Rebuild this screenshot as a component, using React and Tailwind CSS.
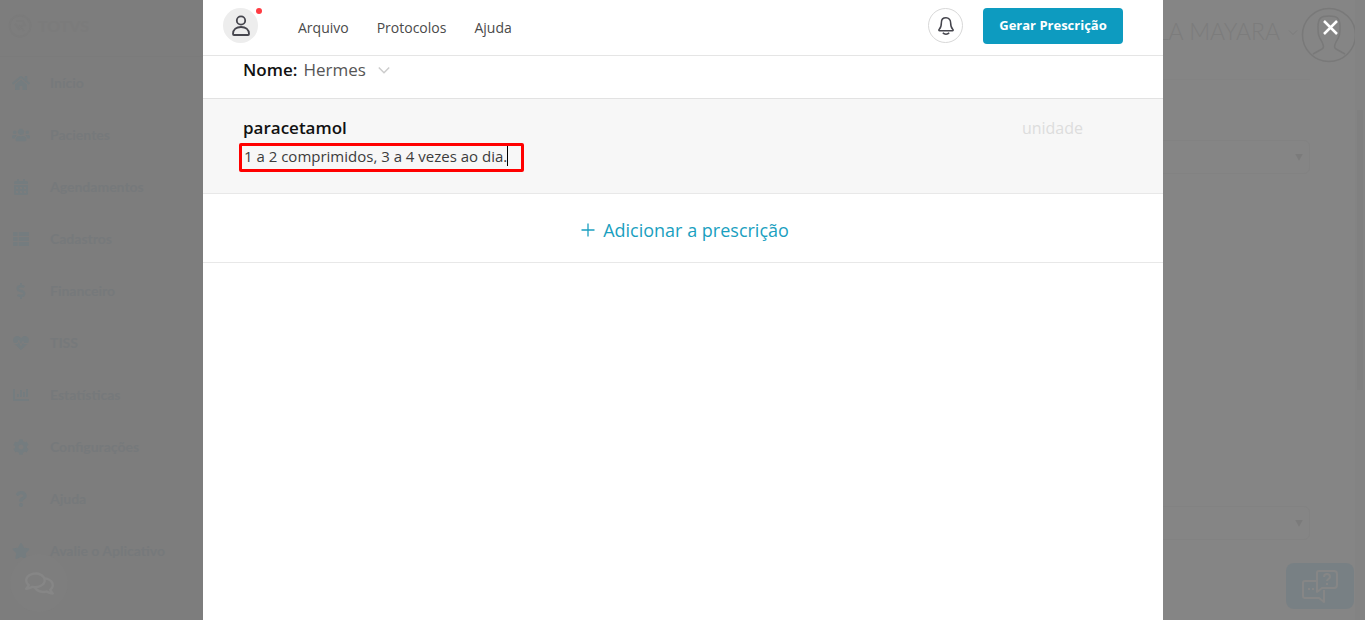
import React, { useState } from 'react';
import {
  FaHome,
  FaUsers,
  FaCalendarAlt,
  FaThList,
  FaDollarSign,
  FaHeartbeat,
  FaChartBar,
  FaCog,
  FaQuestion,
  FaStar,
  FaRegComments,
} from 'react-icons/fa';

const menuItems = [
  { label: 'Início', icon: FaHome },
  { label: 'Pacientes', icon: FaUsers },
  { label: 'Agendamentos', icon: FaCalendarAlt },
  { label: 'Cadastros', icon: FaThList },
  { label: 'Financeiro', icon: FaDollarSign },
  { label: 'TISS', icon: FaHeartbeat },
  { label: 'Estatísticas', icon: FaChartBar },
  { label: 'Configurações', icon: FaCog },
  { label: 'Ajuda', icon: FaQuestion },
  { label: 'Avalie o Aplicativo', icon: FaStar },
];

const Sidebar = () => (
  <aside className="relative w-[203px] shrink-0 bg-[#7d7d7d] font-['Lato',sans-serif]">
    <div className="flex h-[57px] items-center gap-[6px] border-b border-[#7b7b7b] px-2 pb-1 text-[#7b7b7b]">
      <svg viewBox="0 0 24 24" className="size-6" fill="none" stroke="currentColor" strokeWidth="2">
        <circle cx="12" cy="12" r="10.5" />
        <path d="M8 7h7l2 4-5 1 4 5M7 10l5 6" />
      </svg>
      <span className="text-base font-bold">TOTVS</span>
    </div>
    <nav>
      {menuItems.map(({ label, icon: Icon }) => (
        <a key={label} href="#" className="flex h-[52px] items-center gap-5 px-3 text-sm font-bold text-[#76797b]">
          <Icon className="w-[18px] text-base text-[#747c7f]" />
          {label}
        </a>
      ))}
    </nav>
    {/* Chat bubble */}
    <button
      type="button"
      aria-label="Chat"
      className="absolute bottom-2 left-[10px] flex size-[58px] items-center justify-center rounded-full bg-[#7e7e7e] text-[#868686]"
    >
      <FaRegComments className="text-[29px]" />
    </button>
  </aside>
);

const SelectBox = ({ label }) => (
  <div className="flex h-[34px] items-center rounded-md border border-[#828282] pr-1">
    <select aria-label={label} className="h-full flex-1 appearance-none" />
    <svg viewBox="0 0 8 8" className="size-3 text-[#7b7b7b]" fill="currentColor">
      <path d="M1.500 2h5l-2.500 4.500z" />
    </svg>
  </div>
);

const Background = () => (
  <div className="flex h-full">
    <Sidebar />
    <main className="relative flex-1 overflow-hidden bg-[#858585] pr-[9px]">
      <div className="mr-[46px] flex h-20 items-center justify-end gap-2 border-b border-[#838383] pr-3 pb-4 font-['Lato',sans-serif] text-[23px] font-light text-[#7c7c7c]">
        <span>LLA MAYARA</span>
        <svg viewBox="0 0 10 10" className="size-[10px]" fill="none" stroke="currentColor">
          <path d="M1 3.500l4 4 4-4" />
        </svg>
      </div>
      <div className="mr-[46px] flex flex-col gap-[332px] pt-[60px]">
        <SelectBox label="Convênio" />
        <SelectBox label="Procedimento" />
      </div>
      {/* User avatar */}
      <svg
        viewBox="0 0 56 56"
        className="absolute top-[7px] right-2 size-14 text-[#797979]"
        fill="none"
        stroke="currentColor"
        strokeWidth="1.500"
      >
        <circle cx="28" cy="28" r="26.500" />
        <path d="M12 47l9-5c2-1 2-3 0-7-4-6-4-9-4-15 0-9 3-11 11-11s11 2 11 11c0 6 0 9-4 15-2 4-2 6 0 7l9 5" />
      </svg>
      {/* Scrollbar */}
      <div className="absolute inset-y-0 right-0 w-[10px] bg-[#838383] pt-[110px]">
        <div className="mx-[2px] h-[280px] bg-[#808080]" />
      </div>
      <button
        type="button"
        aria-label="Suporte"
        className="absolute right-[11px] bottom-[11px] flex h-[46px] w-[68px] items-center justify-center rounded-lg bg-[#788084] text-[#868686]"
      >
        <svg
          viewBox="0 0 38 34"
          className="h-[34px] w-[38px]"
          fill="none"
          stroke="currentColor"
          strokeWidth="2"
          strokeLinejoin="round"
        >
          <path d="M18 2h15a3 3 0 0 1 3 3v11a3 3 0 0 1-3 3H21l-5 4V4a2 2 0 0 1 2-2z" />
          <path d="M16 12H4a2 2 0 0 0-2 2v13a2 2 0 0 0 2 2h14l5 4V21" />
          <path d="M23 8c0-4 6-4 6 0 0 2-3 2-3 4M26 14v2M7 20h2M11 20h2" />
        </svg>
      </button>
    </main>
  </div>
);

const App = () => {
  const [dosage, setDosage] = useState('1 a 2 comprimidos, 3 a 4 vezes ao dia.');

  return (
    <div className="relative h-screen overflow-hidden font-['Open_Sans',sans-serif]">
      <Background />

      {/* Prescription modal */}
      <div className="absolute inset-0 flex justify-center pl-px">
        <section role="dialog" aria-label="Prescrição" className="h-full w-[960px] bg-white">
          <header className="flex h-14 items-center border-b border-[#e5e5e5] pr-10 pb-1 pl-5">
            <button
              type="button"
              aria-label="Perfil"
              className="relative flex size-[35px] items-center justify-center rounded-full bg-[#ededed] text-[#45454d]"
            >
              <svg viewBox="0 0 20 22" className="h-[22px] w-5" fill="none" stroke="currentColor" strokeWidth="1.800">
                <circle cx="10" cy="5.500" r="4.200" />
                <path d="M2 19c0-4.500 3.500-7 8-7s8 2.500 8 7c0 .7-.3 1-1 1H3c-.7 0-1-.3-1-1z" />
              </svg>
              <span className="absolute top-0 -right-1 size-[6px] rounded-full bg-[#ff3b42]" />
            </button>
            <nav className="ml-10 flex gap-7 pt-1 text-sm text-[#4a4a4a]">
              <a href="#">Arquivo</a>
              <a href="#">Protocolos</a>
              <a href="#">Ajuda</a>
            </nav>
            <button
              type="button"
              aria-label="Notificações"
              className="mr-5 ml-auto flex size-[35px] items-center justify-center rounded-full border border-[#d8d8d8] text-[#45454d]"
            >
              <svg
                viewBox="0 0 16 18"
                className="h-[18px] w-4"
                fill="none"
                stroke="currentColor"
                strokeWidth="1.500"
                strokeLinejoin="round"
              >
                <path d="M8 .8C5 .8 3.400 3 3.400 5.500c0 4-.7 5.500-2.300 7-.5.600-.3 1.300.5 1.300h12.800c.8 0 1-.7.500-1.300-1.600-1.500-2.300-3-2.300-7C12.600 3 11 .8 8 .8z" />
                <path d="M4.800 15.800c1.500 1.800 4.900 1.800 6.400 0" />
              </svg>
            </button>
            <button type="button" className="h-9 w-[140px] rounded bg-[#0d9bc0] text-[13px] font-bold text-white">
              Gerar Prescrição
            </button>
          </header>

          {/* Patient name */}
          <div className="flex h-[43px] items-start gap-[6px] border-b border-[#e2e2e2] px-10 pt-[2px] text-[17px] leading-6">
            <span className="font-semibold text-[#111111]">Nome:</span>
            <button type="button" className="flex items-center gap-3 text-[#555555]">
              Hermes
              <svg viewBox="0 0 12 8" className="h-2 w-3" fill="none" stroke="#cccccc" strokeWidth="1.500">
                <path d="M.8 1.500l5.200 5.200 5.200-5.200" />
              </svg>
            </button>
          </div>

          {/* Prescribed medicine */}
          <div className="flex h-[95px] justify-between border-b border-[#e8e8e8] bg-[#f7f7f7] pt-4 pr-20 pl-9">
            <div>
              <h2 className="pt-px pl-1 text-[17px] leading-6 font-semibold text-[#111111]">paracetamol</h2>
              <div className="mt-[3px] flex h-[29px] w-[285px] items-start rounded-[2px] border-3 border-[#ff0000] pl-[2px]">
                <input
                  type="text"
                  aria-label="Posologia"
                  value={dosage}
                  onChange={(e) => setDosage(e.target.value)}
                  className="field-sizing-content text-[15px] leading-5 text-[#3c3c3c] outline-none"
                />
                <span className="h-5 w-px bg-black" />
              </div>
            </div>
            <span className="pt-px text-base text-[#dddddd]">unidade</span>
          </div>

          <button
            type="button"
            className="flex h-[69px] w-full items-center justify-center gap-2 border-b border-[#e8e8e8] pt-1 pl-1 text-lg text-[#1a9fc0]"
          >
            <svg viewBox="0 0 14 14" className="size-[14px]" fill="none" stroke="currentColor" strokeWidth="1.300">
              <path d="M7 .5v13M.5 7h13" />
            </svg>
            Adicionar a prescrição
          </button>
        </section>
      </div>

      <button type="button" aria-label="Fechar" className="absolute top-5 right-[27px] text-white">
        <svg viewBox="0 0 15 15" className="size-[15px]" fill="none" stroke="currentColor" strokeWidth="2.500">
          <path d="M1 1l13 13M14 1L1 14" />
        </svg>
      </button>
    </div>
  );
};

export default App;
